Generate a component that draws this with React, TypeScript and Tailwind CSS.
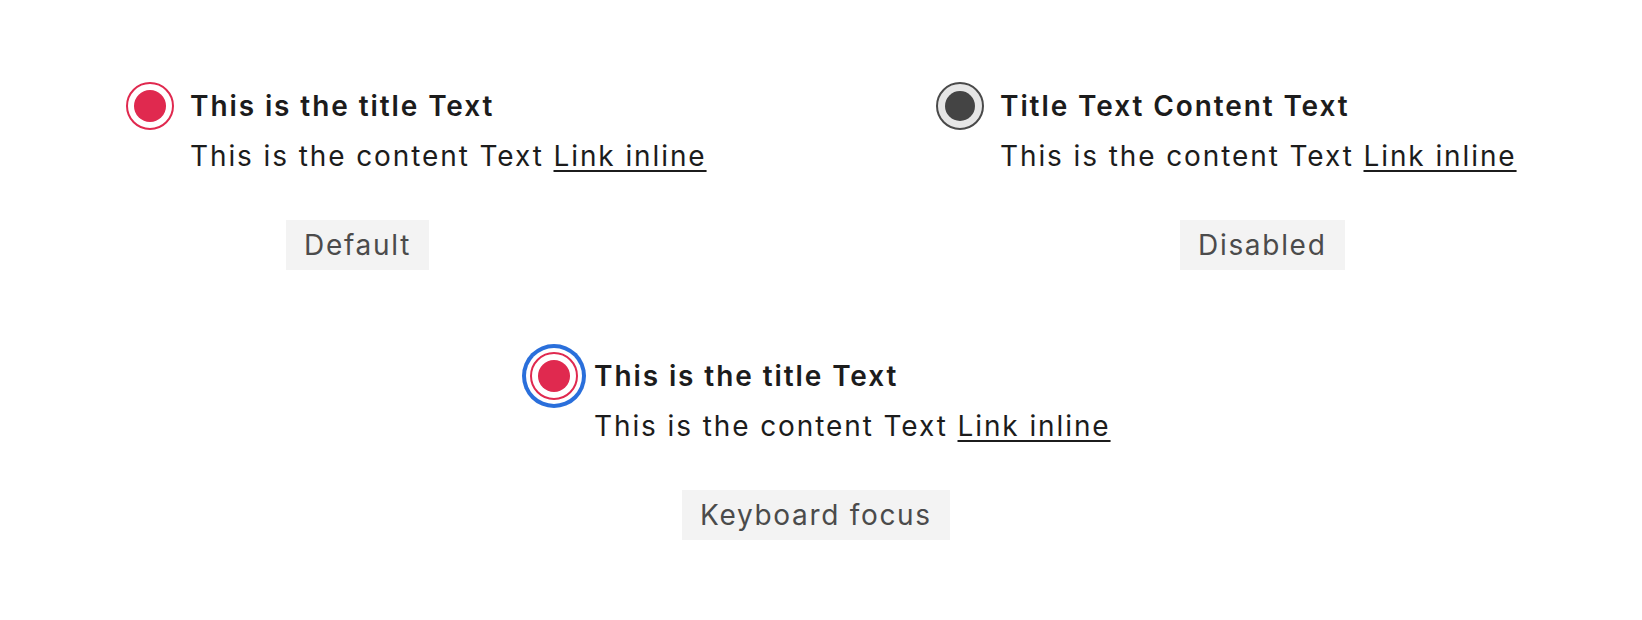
import React from "react";

type Variant = "default" | "disabled" | "focus";

function Radio({ variant }: { variant: Variant }) {
  if (variant === "disabled") {
    return (
      <div className="w-[48px] h-[48px] shrink-0 rounded-full border-2 border-[#4a4a4a] bg-[#e6e6e6] flex items-center justify-center">
        <div className="w-[30px] h-[30px] rounded-full bg-[#444444]" />
      </div>
    );
  }
  return (
    <div
      className={
        "w-[48px] h-[48px] shrink-0 rounded-full border-2 border-[#e0294f] bg-white flex items-center justify-center " +
        (variant === "focus" ? "shadow-[0_0_0_4px_#ffffff,0_0_0_8px_#2a6fdb]" : "")
      }
    >
      <div className="w-[32px] h-[32px] rounded-full bg-[#e0294f]" />
    </div>
  );
}

function Item({
  variant,
  title,
  label,
  labelOffset,
}: {
  variant: Variant;
  title: string;
  label: string;
  labelOffset: string;
}) {
  return (
    <div className="flex flex-col">
      <div className="flex items-center gap-[16px]">
        <Radio variant={variant} />
        <div className="text-[28px] leading-[36px] font-semibold text-[#1c1c1c] tracking-[1.9px] whitespace-nowrap">
          {title}
        </div>
      </div>
      <div className="pl-[64px] mt-[8px] text-[28px] leading-[36px] text-[#1c1c1c] tracking-[1.9px] whitespace-nowrap">
        This is the content Text{" "}
        <a href="#" className="underline underline-offset-[4px] decoration-[1.5px] text-[#1c1c1c]">
          Link inline
        </a>
      </div>
      <div className={"mt-[46px] flex " + labelOffset}>
        <div className="h-[50px] flex items-center px-[18px] bg-[#f3f3f3] text-[28px] text-[#4b4b4b] tracking-[1.7px] whitespace-nowrap">
          {label}
        </div>
      </div>
    </div>
  );
}

export default function App() {
  return (
    <div
      className="w-[1642px] h-[620px] bg-white flex flex-col"
      style={{ fontFamily: "Inter, 'Noto Sans', sans-serif" }}
    >
      <div className="flex pt-[82px]">
        <div className="ml-[126px] w-[810px]">
          <Item variant="default" title="This is the title Text" label="Default" labelOffset="pl-[160px]" />
        </div>
        <div>
          <Item variant="disabled" title="Title Text Content Text" label="Disabled" labelOffset="pl-[244px]" />
        </div>
      </div>
      <div className="flex pt-[82px] pl-[530px]">
        <Item variant="focus" title="This is the title Text" label="Keyboard focus" labelOffset="pl-[152px]" />
      </div>
    </div>
  );
}
